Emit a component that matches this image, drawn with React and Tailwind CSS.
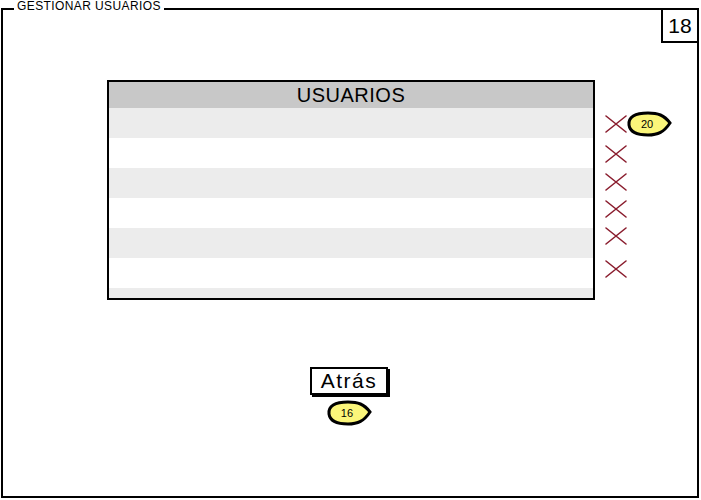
import React from 'react';

const rows = [0, 1, 2, 3, 4, 5];

const XMark = () => (
    <svg width="24" height="20" viewBox="0 0 24 20">
        <path d="M2 2 L22 18 M2 18 L22 2" stroke="#8a1d2e" strokeWidth="1.6" fill="none" strokeLinecap="round" />
    </svg>
);

const Bubble = ({ label, className }) => (
    <div className={`relative ${className}`}>
        <svg width="46" height="26" viewBox="0 0 46 26" className="absolute inset-0">
            <path d="M3 14 C2 6 9 2 22 2 C32 2 38 4 44 12 C38 21 32 24 22 24 C10 24 4 21 3 14 Z" fill="#fbf67a" stroke="#000" strokeWidth="3" />
        </svg>
        <span className="relative flex h-[26px] w-[46px] items-center justify-center pr-1 text-[11px] text-black">{label}</span>
    </div>
);

const App = () => {
    return (
        <div className="h-[500px] w-[701px] bg-white pt-2 pl-px pr-[2px] pb-[2px] font-['Liberation_Sans',sans-serif]">
            <div className="relative h-full w-full border-2 border-black">
                {/* title on the frame */}
                <div className="absolute -top-[11px] left-[11px] bg-white px-[3px] text-[12px] leading-[14px] tracking-[0.4px] text-black">
                    GESTIONAR USUARIOS
                </div>

                {/* page number */}
                <div className="absolute -top-[2px] -right-[2px] flex h-[35px] w-[38px] items-center justify-center border-2 border-black bg-white text-[21px] text-black">
                    18
                </div>

                <div className="flex flex-col items-center pt-[70px]">
                    <div className="flex w-full pl-[104px]">
                        {/* table */}
                        <div className="w-[488px] border-2 border-black bg-white">
                            <div className="flex h-[26px] items-center justify-center bg-[#c8c8c8] text-[20px] tracking-[0.5px] text-black">
                                USUARIOS
                            </div>
                            {rows.map((r) => (
                                <div key={r} className={`h-[30px] ${r % 2 === 0 ? 'bg-[#ececec]' : 'bg-white'}`} />
                            ))}
                            <div className="h-[10px] bg-[#ececec]" />
                        </div>

                        {/* delete marks */}
                        <div className="flex flex-col pl-[9px] pt-[31px]">
                            <div className="flex items-center">
                                <XMark />
                                <Bubble label="20" className="-ml-[2px] h-[26px] w-[46px]" />
                            </div>
                            <div className="mt-[7px]"><XMark /></div>
                            <div className="mt-[8px]"><XMark /></div>
                            <div className="mt-[7px]"><XMark /></div>
                            <div className="mt-[7px]"><XMark /></div>
                            <div className="mt-[13px]"><XMark /></div>
                        </div>
                    </div>

                    <div className="mt-[67px] flex flex-col items-center pr-[2px]">
                        <div className="border-2 border-black bg-white px-[9px] text-[21px] leading-[24px] tracking-[1.5px] text-black shadow-[2px_2px_0_#000]">
                            Atrás
                        </div>
                        <Bubble label="16" className="mt-[5px] h-[26px] w-[46px]" />
                    </div>
                </div>
            </div>
        </div>
    );
};

export default App;
